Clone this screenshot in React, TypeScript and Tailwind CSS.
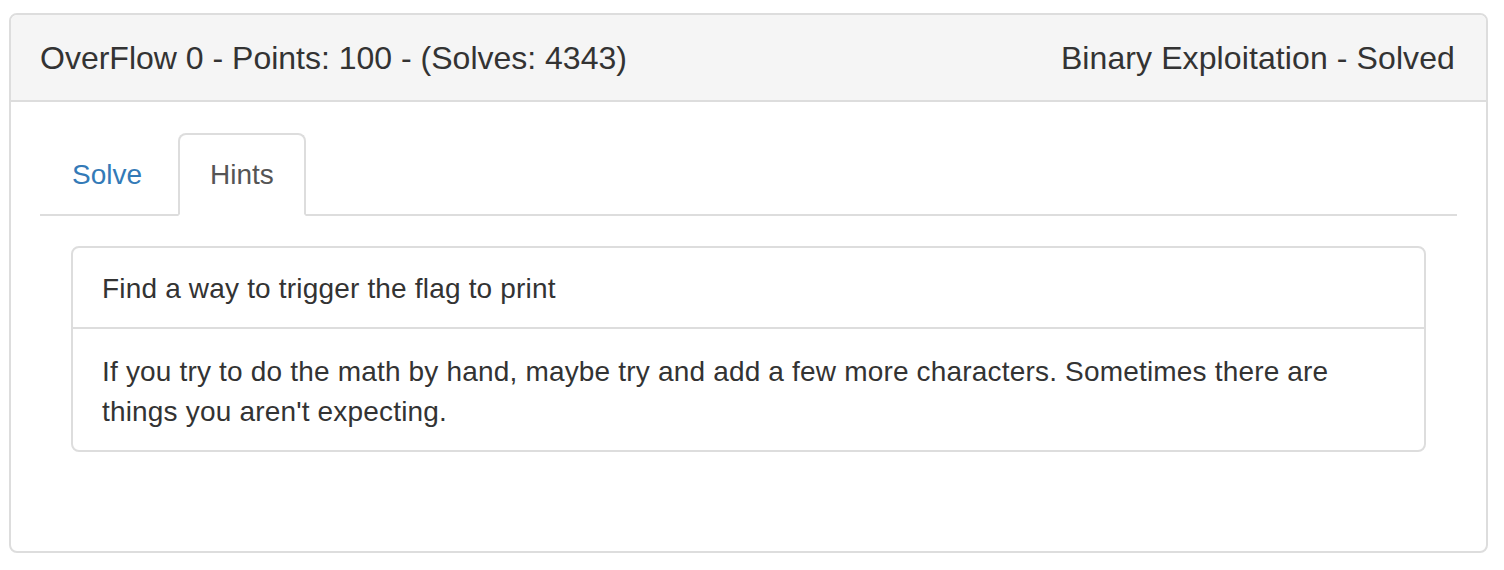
import React from 'react';

const App: React.FC = () => {
  return (
    <div className="min-h-screen bg-white pt-[13px] pl-[9px] text-[#333]" style={{ fontFamily: '"Liberation Sans", Arial, sans-serif' }}>
      <div className="w-[1479px] h-[540px] border-2 border-[#ddd] rounded-[8px] overflow-hidden">
        <div className="h-[87px] bg-[#f5f5f5] border-b-2 border-[#ddd] flex items-center justify-between pl-[29px] pr-[31px] text-[32px]">
          <span>OverFlow 0 - Points: 100 - (Solves: 4343)</span>
          <span className="tracking-[0.1px]">Binary Exploitation - Solved</span>
        </div>
        <div className="px-[29px] pt-[31px]">
          <ul className="flex border-b-2 border-[#ddd] text-[28px] leading-[40px]">
            <li className="mr-[4px] -mb-[2px]">
              <a href="#solve" className="block px-[30px] pt-[20px] pb-[19px] border-2 border-transparent text-[#337ab7]">
                Solve
              </a>
            </li>
            <li className="-mb-[2px]">
              <a href="#hints" className="block px-[30px] pt-[20px] pb-[19px] border-2 border-[#ddd] border-b-white bg-white rounded-t-[8px] text-[#555]">
                Hints
              </a>
            </li>
          </ul>
          <div className="px-[31px] pt-[30px]">
            <div className="border-2 border-[#ddd] rounded-[8px] text-[28px] leading-[40px] tracking-[0.18px]">
              <div className="px-[29px] pt-[21px] pb-[18px] border-b-2 border-[#ddd]">Find a way to trigger the flag to print</div>
              <div className="px-[29px] pt-[23px] pb-[18px]">
                If you try to do the math by hand, maybe try and add a few more characters. Sometimes there are things you aren't expecting.
              </div>
            </div>
          </div>
        </div>
      </div>
    </div>
  );
};

export default App;
